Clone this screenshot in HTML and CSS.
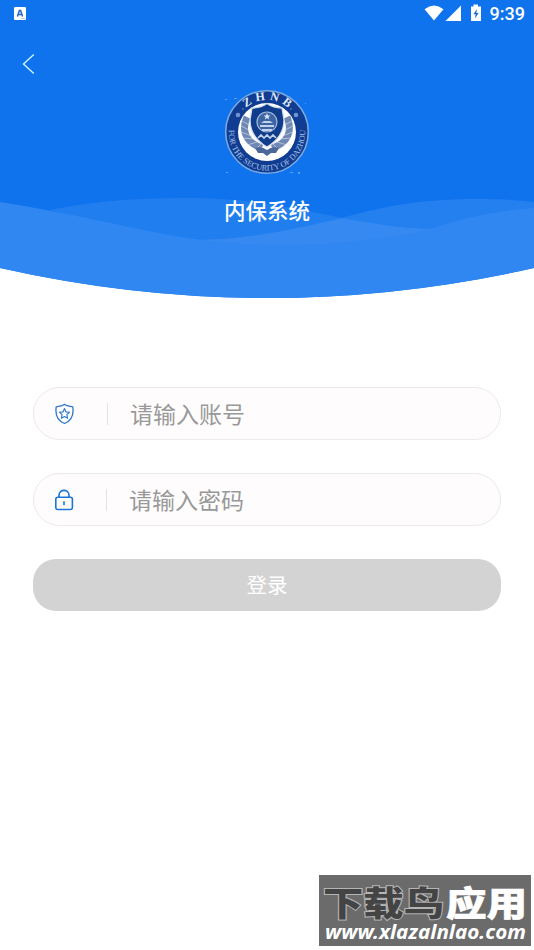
FILE: index.html
```html
<!DOCTYPE html>
<html lang="zh-CN">
<head>
  <meta charset="UTF-8">
  <meta name="viewport" content="width=device-width, initial-scale=1.0">
  <title>内保系统</title>
  <link rel="stylesheet" href="styles.css">
</head>
<body>
  <!-- Header -->
  <header class="header">
    <svg class="waves" viewBox="0 0 534 300">
      <path fill="#0f73ee" d="M0 0H534V268Q267 328 0 268Z"/>
      <path fill="#fff" fill-opacity=".08" d="M50 210C90 202 130 198 185 198C250 198 300 209 342 218C375 224 400 228 430 229L400 250H200Z"/>
      <path fill="#fff" fill-opacity=".09" d="M195 240C245 240 290 230 342 218C385 206 420 199 482 199Q510 199 534 202V250H200Z"/>
      <path fill="#3087f1" d="M0 202C65 212 130 228 180 237C230 245 290 248 345 242C380 239 410 235 430 229C465 217 500 210 534 208V268Q267 328 0 268Z"/>
    </svg>

    <div class="status-bar">
      <svg class="app-icon" width="12" height="13" viewBox="0 0 12 13">
        <rect width="12" height="13" rx="1" fill="#fff"/>
        <path d="M3.4 9.5L5.4 3.6H6.6L8.6 9.5M4.2 7.5H7.8" fill="none" stroke="#2866c4" stroke-width="1.5"/>
        <path d="M7 11.5H11" stroke="#8bb5ee" stroke-width=".7"/>
      </svg>
      <div class="status-right">
        <svg width="53" height="18" viewBox="0 0 53 18">
          <g fill="#fff">
            <path d="M-.5 4.2Q9 -3 18.500 4.200L9 15.500Z"/>
            <path d="M36 .5V16H20.500Z"/>
            <path d="M48.500 -.5H53V1.500H56V16H46V1.500H48.500Z"/>
          </g>
          <path d="M52 4L48.500 9.300H50.700L50 13.500L53.600 8H51.400Z" fill="#1769cf"/>
        </svg>
        <span class="clock">9:39</span>
      </div>
    </div>

    <a class="back" href="#" aria-label="返回">
      <svg width="14" height="22" viewBox="0 0 14 22">
        <path d="M11.800 1.500L1.500 11L11.800 20.500" fill="none" stroke="#d9faff" stroke-width="1.300"/>
      </svg>
    </a>

    <div class="brand">
      <svg class="badge" width="86" height="86" viewBox="0 0 86 86">
        <defs>
          <path id="arc-top" d="M11 43A32 32 0 0 1 75 43"/>
          <path id="arc-bottom" d="M5.400 36A38.300 38.300 0 1 0 80.600 36"/>
        </defs>
        <circle cx="43" cy="43" r="41.300" fill="#103c91" stroke="#7daae0" stroke-width="1.500"/>
        <circle cx="43" cy="43" r="29" fill="#fff"/>
        <text class="badge-top"><textPath href="#arc-top" startOffset="52%">ZHNB</textPath></text>
        <text class="badge-bottom"><textPath href="#arc-bottom" startOffset="50%">FOR THE SECURITY OF DAZHOU</textPath></text>
        <g fill="#6d94d0">
          <circle cx="14" cy="26" r="2.300"/>
          <circle cx="72" cy="26" r="2.300"/>
          <circle cx="19" cy="20" r=".8"/>
          <circle cx="67" cy="20" r=".8"/>
        </g>
        <!-- laurel branches -->
        <g fill="none" stroke="#7088b4" stroke-width="7">
          <path d="M23 28C17 42 22 54 38 59"/>
          <path d="M63 28C69 42 64 54 48 59"/>
        </g>
        <g fill="none" stroke="#dce7f5" stroke-width=".6">
          <path d="M18 32L27 37M17 37L27 42M17 43L28 47M19 49L30 50M23 56L33 53M31 61L37 55"/>
          <path d="M68 32L59 37M69 37L59 42M69 43L58 47M67 49L56 50M63 56L53 53M55 61L49 55"/>
        </g>
        <path d="M31 59Q38 57 43 61Q48 57 55 59L52 64H47L43 67L39 64H34Z" fill="#4c6799"/>
        <!-- shield -->
        <path d="M43 14.500Q49 19 58 19L60 31C60 43 53 52 43 58C33 52 26 43 26 31L28 19Q37 19 43 14.500Z" fill="#103c8c" stroke="#d3deee" stroke-width="1.300"/>
        <circle cx="43" cy="33" r="10" fill="#3d65a4" stroke="#a6bbdc" stroke-width="1.200"/>
        <path d="M43 24L44 26.500H46.500L44.500 28L45.200 30.500L43 29L40.800 30.500L41.500 28L39.500 26.500H42Z" fill="#dce7f5"/>
        <path d="M37 34L40 32H46L49 34ZM36 36H50V38H36ZM38 40H48V42H38Z" fill="#c3d3e9"/>
        <path d="M34 49L37 46L40 49L43 46L46 49L49 46L52 49" fill="none" stroke="#c3d3e9" stroke-width="1.600"/>
        <g fill="#58a0f5">
          <path d="M1 10h2v1h-2zM10 9h3v1h-3zM81 14h1v1h-1zM2 83h2v1h-2zM66 83h3v1h-3zM74 83h2v2h-2z"/>
        </g>
      </svg>
      <h1 class="title">内保系统</h1>
    </div>
  </header>

  <!-- Login form -->
  <form class="login-form">
    <label class="field">
      <svg class="field-icon" width="21" height="22" viewBox="0 0 21 22" fill="none" stroke="#2c78cb" stroke-linejoin="round">
        <path d="M10.500 1.300C13 3.300 16 3.600 18.800 3.800C19.900 11.500 18 17.500 10.500 20.500C3 17.500 1.100 11.500 2.200 3.800C5 3.600 8 3.300 10.500 1.300Z" stroke-width="1.300"/>
        <path d="M10.500 5.600L12 8.900L15.500 9.300L12.900 11.700L13.600 15.200L10.500 13.500L7.400 15.200L8.100 11.700L5.500 9.300L9 8.900Z" stroke-width="1.100"/>
      </svg>
      <span class="divider"></span>
      <input class="field-input" type="text" placeholder="请输入账号">
    </label>
    <label class="field">
      <svg class="field-icon" width="20" height="22" viewBox="0 0 20 22" fill="none" stroke="#1c76d6" stroke-width="1.600">
        <rect x="1.800" y="8.300" width="16.600" height="12.200" rx="2"/>
        <path d="M5 8.300V6.300C5 -.3 15 -.3 15 6.300V8.300M10 12.300V16.300"/>
      </svg>
      <span class="divider"></span>
      <input class="field-input" type="password" placeholder="请输入密码">
    </label>
    <button class="login-btn" type="button">登录</button>
  </form>

  <!-- Site mark -->
  <div class="site-mark">
    <svg class="mark-name" width="212" height="47" viewBox="0 0 212 47">
      <text class="mark-dark" x="4" y="41" textLength="121" lengthAdjust="spacingAndGlyphs">下载鸟</text>
      <text class="mark-light" x="127" y="41" textLength="81" lengthAdjust="spacingAndGlyphs">应用</text>
    </svg>
    <svg class="mark-url" width="212" height="24" viewBox="0 0 212 24">
      <text x="6" y="17" textLength="201" lengthAdjust="spacingAndGlyphs">www.xlazalnlao.com</text>
    </svg>
  </div>
</body>
</html>
```
FILE: styles.css
```css
* {
  margin: 0;
  padding: 0;
  box-sizing: border-box;
}

body {
  min-height: 950px;
  background: #fff;
  font-family: Roboto, "Noto Sans CJK SC", sans-serif;
  overflow: hidden;
}

/* Header */
.header {
  position: relative;
  height: 300px;
  color: #fff;
}

.waves {
  position: absolute;
  top: 0;
  left: 0;
  z-index: -1;
  width: 534px;
  height: 300px;
}

.status-bar {
  display: flex;
  justify-content: space-between;
  align-items: center;
  height: 27px;
  padding: 0 9px 0 14px;
}

.status-right {
  display: flex;
  align-items: center;
  gap: 8px;
}

.status-right svg {
  overflow: visible;
  margin-right: 4px;
}

.clock {
  font-size: 18px;
  font-weight: 500;
  line-height: 27px;
}

.back {
  display: block;
  width: 14px;
  height: 22px;
  margin: 26px 0 0 22px;
}

.back svg,
.badge {
  display: block;
}

.brand {
  display: flex;
  flex-direction: column;
  align-items: center;
  margin-top: 14px;
}

.badge-top,
.badge-bottom {
  fill: #dce9fa;
  font-family: "Liberation Serif", serif;
  text-anchor: middle;
}

.badge-top {
  font-size: 12px;
  font-weight: bold;
  letter-spacing: 4px;
}

.badge-bottom {
  fill: #a9c4ea;
  font-size: 8.2px;
}

.title {
  margin-top: 21px;
  font-size: 21.5px;
  font-weight: 500;
  line-height: 32px;
}

/* Form */
.login-form {
  display: flex;
  flex-direction: column;
  padding: 87px 33px 0;
}

.field {
  display: flex;
  align-items: center;
  height: 53px;
  margin-bottom: 33px;
  padding: 0 20px;
  border: 1px solid #ece9eb;
  border-radius: 27px;
  background: #fefcfd;
}

.divider {
  width: 1px;
  height: 22px;
  margin: 0 22px 0 32px;
  background: #e3e3e5;
}

.field-input {
  flex: 1;
  min-width: 0;
  padding-bottom: 2px;
  border: 0;
  outline: 0;
  background: transparent;
  font-family: "Noto Sans CJK SC", sans-serif;
  font-size: 23px;
}

.field-input::placeholder {
  color: #999;
}

.login-btn {
  height: 52px;
  padding-bottom: 2px;
  border: 0;
  border-radius: 23px;
  background: #d3d3d3;
  color: #fff;
  font-family: "Noto Sans CJK SC", sans-serif;
  font-size: 20.5px;
}

/* Site mark */
.site-mark {
  position: absolute;
  left: 319px;
  top: 875px;
  width: 212px;
  height: 71px;
  background: #6b6b6b;
}

.site-mark svg {
  display: block;
  overflow: visible;
}

.mark-name {
  font-family: "Noto Sans CJK SC", sans-serif;
  font-size: 34px;
  font-weight: 900;
}

.mark-dark {
  fill: #444;
  stroke: #b5b5b5;
  stroke-width: 2px;
  paint-order: stroke;
}

.mark-light,
.mark-url {
  fill: #fff;
}

.mark-light {
  stroke: #fff;
  stroke-width: 0.6px;
}

.mark-url {
  font-family: "Noto Sans", sans-serif;
  font-size: 20px;
  font-style: italic;
  font-weight: 700;
}
```
